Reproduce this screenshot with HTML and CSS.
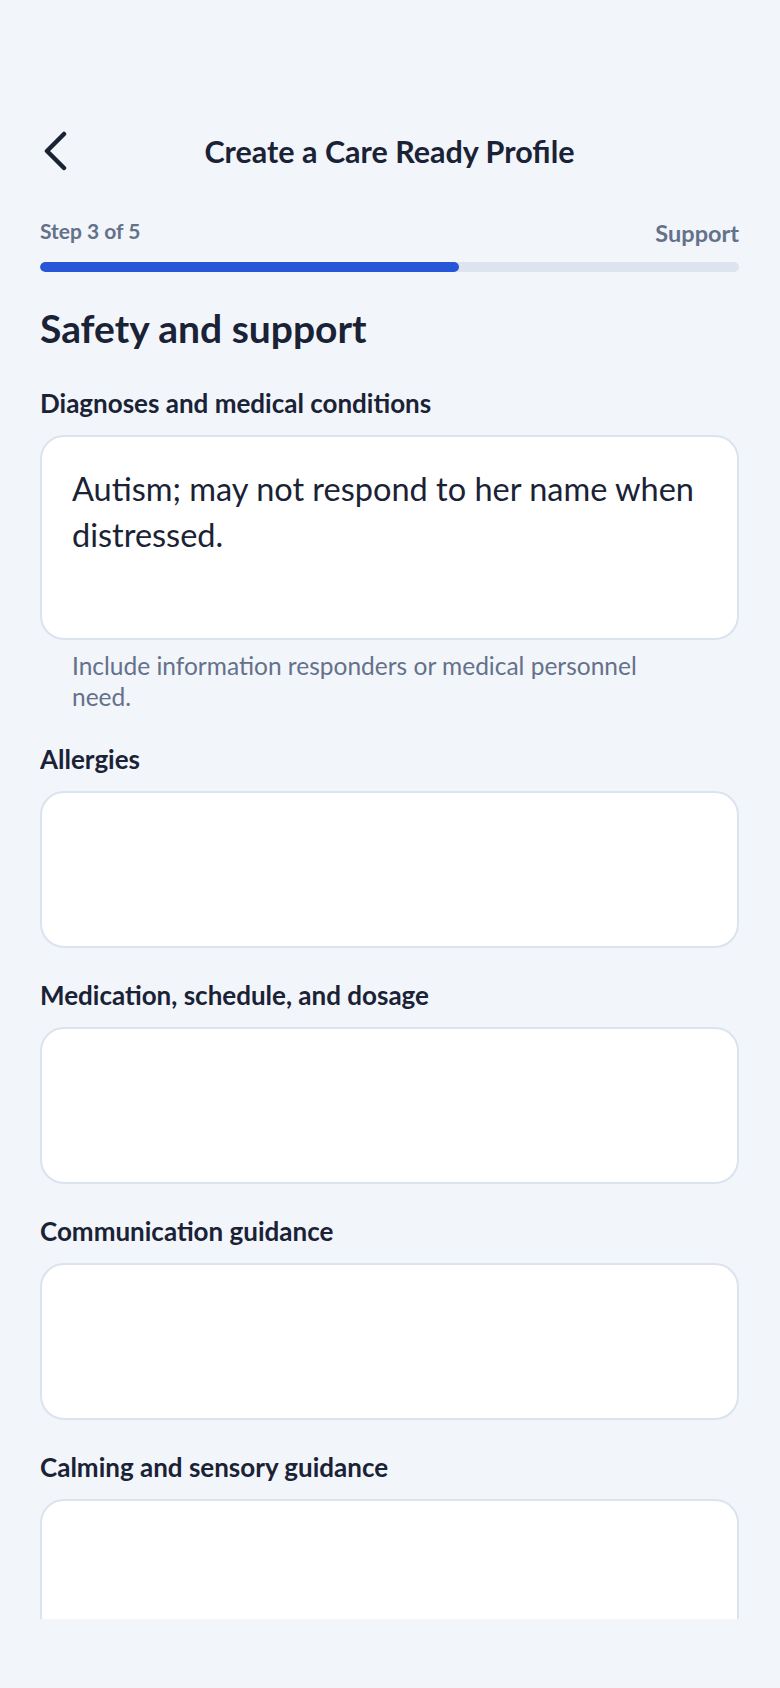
FILE: index.html
```html
<!DOCTYPE html>
<html>

<head>
    <meta charset="utf-8">
    <title>Create a Care Ready Profile</title>
    <meta name="viewport" content="initial-scale=1.0, width=device-width">
    <link rel="stylesheet" href="styles.css">
</head>

<body>
    <div id="screen">
        <header id="topbar">
            <button class="back" aria-label="Back">
                <svg width="30" height="40" viewBox="0 0 30 40">
                    <path d="M24 3 L7 20 L24 37" fill="none" stroke="#1a2236" stroke-width="4.5" stroke-linecap="round" stroke-linejoin="round" />
                </svg>
            </button>
            <h1>Create a Care Ready Profile</h1>
            <span></span>
        </header>

        <div id="progress">
            <div class="meta">
                <span class="step">Step 3 of 5</span>
                <span class="stage">Support</span>
            </div>
            <div class="track">
                <div class="fill" style="width: 60%"></div>
            </div>
        </div>

        <form id="content" action="javascript:void(0)">
            <h2>Safety and support</h2>

            <div class="field">
                <label for="diagnoses">Diagnoses and medical conditions</label>
                <textarea id="diagnoses" class="tall">Autism; may not respond to her name when distressed.</textarea>
                <p class="help">Include information responders or medical personnel need.</p>
            </div>

            <div class="field">
                <label for="allergies">Allergies</label>
                <textarea id="allergies"></textarea>
            </div>

            <div class="field">
                <label for="meds">Medication, schedule, and dosage</label>
                <textarea id="meds"></textarea>
            </div>

            <div class="field">
                <label for="comms">Communication guidance</label>
                <textarea id="comms"></textarea>
            </div>

            <div class="field">
                <label for="calming">Calming and sensory guidance</label>
                <textarea id="calming"></textarea>
            </div>
        </form>
    </div>
</body>

</html>
```

FILE: styles.css
```css
 html {
     font-family: 'Lato', 'Noto Sans', sans-serif;
     color: #1a2236;
     background-color: #f2f5fa;
 }

 body {
     margin: 0;
 }

 #screen {
     height: 1688px;
     padding: 120px 41px 69px 40px;
     box-sizing: border-box;
     display: flex;
     flex-direction: column;
 }

 #topbar {
     display: grid;
     grid-template-columns: 60px 1fr 60px;
     align-items: center;
     height: 62px;
 }

 .back {
     background: none;
     border: none;
     padding: 0;
     width: 30px;
     height: 40px;
     cursor: pointer;
 }

 .back svg {
     display: block;
 }

 h1 {
     margin: 0;
     text-align: center;
     font-size: 30.5px;
     font-weight: 700;
     white-space: nowrap;
 }

 .meta {
     display: flex;
     justify-content: space-between;
     align-items: center;
     height: 26px;
     margin-top: 35px;
     color: #64718a;
     font-weight: 700;
 }

 .step {
     font-size: 21px;
 }

 .stage {
     font-size: 23.5px;
     padding-top: 5px;
 }

 .track {
     height: 10px;
     margin-top: 19px;
     border-radius: 5px;
     background: #dde4ef;
     overflow: hidden;
 }

 .fill {
     height: 100%;
     border-radius: 5px;
     background: #2757d7;
 }

 #content {
     flex: 1;
     overflow: hidden;
 }

 h2 {
     margin: 34px 0 0 0;
     font-size: 39px;
     line-height: 44px;
     font-weight: 700;
 }

 .field {
     display: flex;
     flex-direction: column;
     margin-top: 34px;
 }

 h2 + .field {
     margin-top: 40px;
 }

 label {
     font-size: 26px;
     line-height: 26px;
     font-weight: 700;
 }

 textarea {
     margin-top: 19px;
     height: 157px;
     box-sizing: border-box;
     padding: 29px 28px 26px 30px;
     border: 2px solid #dbe3ef;
     border-radius: 24px;
     background: white;
     color: #1a2236;
     font-family: inherit;
     font-size: 32.5px;
     line-height: 46px;
     resize: none;
     outline: none;
 }

 textarea.tall {
     height: 205px;
 }

 .help {
     margin: 10px 0 0 0;
     padding: 0 60px 0 32px;
     color: #64718a;
     font-size: 24.5px;
     line-height: 31px;
 }
```
